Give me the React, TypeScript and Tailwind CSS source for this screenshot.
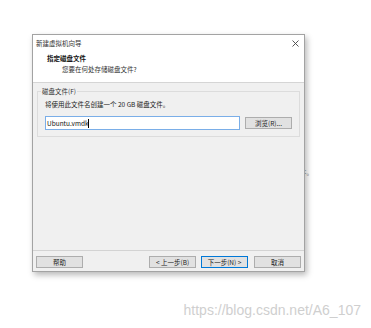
import React from 'react';

const font = { fontFamily: '"Noto Sans CJK SC", "Noto Sans", sans-serif' };

const Btn: React.FC<{ label: string; primary?: boolean }> = ({ label, primary }) => (
  <button
    className={`w-[47px] h-[12px] flex items-center justify-center text-[6.5px] leading-none text-[#222] bg-[#e1e1e1] border ${
      primary ? 'border-[#0078d7]' : 'border-[#adadad]'
    }`}
  >
    {label}
  </button>
);

export default function App() {
  return (
    <div className="relative w-[371px] h-[328px] bg-white overflow-hidden" style={font}>
      {/* bit of the page behind the dialog */}
      <span className="absolute left-[300px] top-[168px] text-[6.5px] leading-[9px] text-[#777]">件。</span>

      <div className="pt-[34px] pl-[32px]">
        <div className="relative z-10 w-[273px] h-[238px] flex flex-col border border-[#a3a3a3] bg-white shadow-[2px_3px_6px_rgba(0,0,0,0.28)]">
          {/* title bar */}
          <div className="h-[17px] flex items-center justify-between pl-[3px] pr-[5px]">
            <span className="text-[6.5px] leading-none text-[#333]">新建虚拟机向导</span>
            <svg width="7" height="7" viewBox="0 0 7 7">
              <path d="M0.5 0.5 L6.5 6.5 M6.5 0.5 L0.5 6.5" stroke="#444" strokeWidth="0.9" />
            </svg>
          </div>

          {/* header */}
          <div className="pt-[2px] pb-[7px] border-b border-[#d5d5d5]">
            <div className="pl-[14px] h-[10px] flex items-center text-[6.5px] font-bold text-[#111]">指定磁盘文件</div>
            <div className="pl-[29px] mt-[1px] h-[10px] flex items-center text-[6.5px] text-[#333]">您要在何处存储磁盘文件?</div>
          </div>

          {/* body */}
          <div className="flex-1 flex flex-col bg-[#f0f0f0]">
            <fieldset className="mx-[4px] mt-[4px] border border-[#dcdcdc] pl-[7px] pr-[7px] pb-[6px]">
              <legend className="ml-[-4px] px-[1px] text-[6.5px] leading-[9px] text-[#333]">磁盘文件(F)</legend>
              <div className="h-[9px] mt-[4px] flex items-center text-[6.5px] text-[#222]">将使用此文件名创建一个 20 GB 磁盘文件。</div>
              <div className="mt-[7px] flex items-center gap-[5px]">
                <div className="w-[195px] h-[14px] bg-white border border-[#7aaee8] flex items-center pl-[1px]">
                  <span className="text-[6.5px] leading-none text-[#111]">Ubuntu.vmdk</span>
                  <span className="w-px h-[9px] bg-black ml-[-1px]" />
                </div>
                <Btn label="浏览(R)..." />
              </div>
            </fieldset>

            <div className="flex-1" />

            <div className="border-t border-[#d3d3d3] pt-[5px] pb-[3px] px-[3px] flex items-center">
              <Btn label="帮助" />
              <div className="ml-auto flex items-center gap-[5px]">
                <Btn label="< 上一步(B)" />
                <Btn label="下一步(N) >" primary />
                <div className="ml-[1px]">
                  <Btn label="取消" />
                </div>
              </div>
            </div>
          </div>
        </div>
      </div>

      <div
        className="mt-[30px] pr-[10px] text-right text-[14px] leading-[16px] text-[#cfcfcf]"
        style={{ fontFamily: '"Liberation Sans", Arial, sans-serif' }}
      >
        https://blog.csdn.net/A6_107
      </div>
    </div>
  );
}
